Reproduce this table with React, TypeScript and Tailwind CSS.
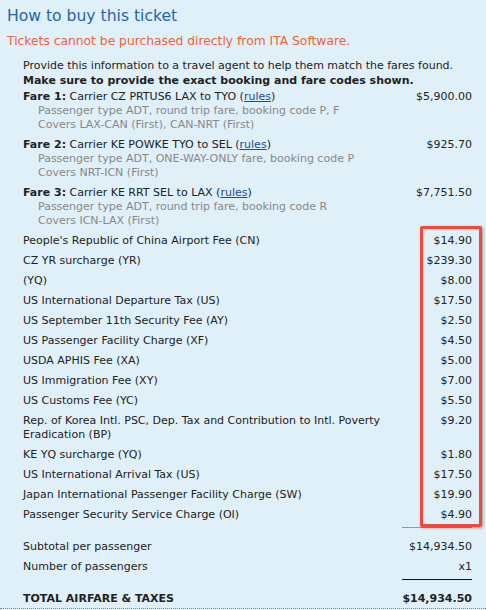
import React from "react";

const fares = [
  {
    label: "Fare 1:",
    text: "Carrier CZ PRTUS6 LAX to TYO",
    amount: "$5,900.00",
    sub: ["Passenger type ADT, round trip fare, booking code P, F", "Covers LAX-CAN (First), CAN-NRT (First)"],
  },
  {
    label: "Fare 2:",
    text: "Carrier KE POWKE TYO to SEL",
    amount: "$925.70",
    sub: ["Passenger type ADT, ONE-WAY-ONLY fare, booking code P", "Covers NRT-ICN (First)"],
  },
  {
    label: "Fare 3:",
    text: "Carrier KE RRT SEL to LAX",
    amount: "$7,751.50",
    sub: ["Passenger type ADT, round trip fare, booking code R", "Covers ICN-LAX (First)"],
  },
];

const taxes: [string, string][] = [
  ["People's Republic of China Airport Fee (CN)", "$14.90"],
  ["CZ YR surcharge (YR)", "$239.30"],
  ["(YQ)", "$8.00"],
  ["US International Departure Tax (US)", "$17.50"],
  ["US September 11th Security Fee (AY)", "$2.50"],
  ["US Passenger Facility Charge (XF)", "$4.50"],
  ["USDA APHIS Fee (XA)", "$5.00"],
  ["US Immigration Fee (XY)", "$7.00"],
  ["US Customs Fee (YC)", "$5.50"],
  ["Rep. of Korea Intl. PSC, Dep. Tax and Contribution to Intl. Poverty Eradication (BP)", "$9.20"],
  ["KE YQ surcharge (YQ)", "$1.80"],
  ["US International Arrival Tax (US)", "$17.50"],
  ["Japan International Passenger Facility Charge (SW)", "$19.90"],
  ["Passenger Security Service Charge (OI)", "$4.90"],
];

export default function App() {
  return (
    <div
      className="relative w-[486px] h-[610px] overflow-hidden bg-[#e0f0f8] text-[#222]"
      style={{ fontFamily: '"DejaVu Sans", Verdana, sans-serif' }}
    >
      <div className="pl-[7px] pt-[5px]">
        <div className="text-[15.6px] leading-[22px] text-[#2463b0]">How to buy this ticket</div>
        <div className="mt-[6px] text-[12.3px] leading-[16px] text-[#e8653a]">
          Tickets cannot be purchased directly from ITA Software.
        </div>
      </div>
      <div className="pl-[23px] pr-[14px] pt-[9px] text-[11px]">
        <div className="leading-[15px]">Provide this information to a travel agent to help them match the fares found.</div>
        <div className="leading-[15px] font-bold">Make sure to provide the exact booking and fare codes shown.</div>
        {fares.map((f, i) => (
          <div
            key={f.label}
            className={
              i === 0
                ? "flex justify-between pt-[2px] pb-[3px] leading-[14px]"
                : "flex justify-between py-[3px] leading-[14px]"
            }
          >
            <div>
              <div>
                <span className="font-bold">{f.label}</span> {f.text} (
                <a className="text-[#1a4a9a] underline">rules</a>)
              </div>
              {f.sub.map((s) => (
                <div key={s} className="pl-[15px] text-[#888]">
                  {s}
                </div>
              ))}
            </div>
            <div>{f.amount}</div>
          </div>
        ))}
        {taxes.map(([t, a], i) => (
          <div key={i} className="flex justify-between py-[3px] leading-[14px]">
            <div className={i === 9 ? "w-[390px]" : ""}>{t}</div>
            <div>{a}</div>
          </div>
        ))}
        <div className="flex justify-end mt-[2px]">
          <div className="w-[70px] h-px bg-[#999]" />
        </div>
        <div className="mt-[9px] flex justify-between py-[3px] leading-[14px]">
          <div>Subtotal per passenger</div>
          <div>$14,934.50</div>
        </div>
        <div className="flex justify-between py-[3px] leading-[14px]">
          <div>Number of passengers</div>
          <div>x1</div>
        </div>
        <div className="flex justify-end mt-[2px]">
          <div className="w-[70px] h-px bg-[#111]" />
        </div>
        <div className="mt-[9px] flex justify-between py-[3px] leading-[14px] font-bold">
          <div>TOTAL AIRFARE &amp; TAXES</div>
          <div>$14,934.50</div>
        </div>
      </div>
      <div className="absolute left-0 right-0 top-[608px] border-t border-dotted border-[#888]" />
      <div className="absolute left-[420px] top-[226px] w-[62px] h-[301px] border-[3px] border-[#f4473a] rounded-[2px] shadow-[1px_1px_3px_rgba(0,0,0,0.35)]" />
    </div>
  );
}
